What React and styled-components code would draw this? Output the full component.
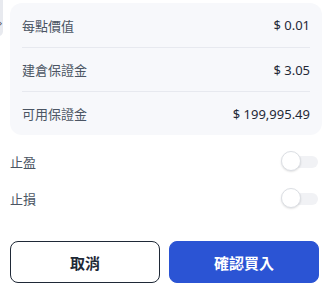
import React, { useState } from 'react'
import styled, { createGlobalStyle } from 'styled-components'

const GlobalStyle = createGlobalStyle`
  html, body { margin: 0; padding: 0; background: #ffffff; overflow: hidden; }
  body { font-family: "Noto Sans", "Noto Sans CJK TC", sans-serif; }
`

const Page = styled.div`
  position: relative;
  width: 327px;
  height: 283px;
  padding: 3px 5px 0 10px;
  box-sizing: border-box;
`

const EdgeTab = styled.div`
  position: absolute;
  left: -6px;
  top: -6px;
  width: 9px;
  height: 42px;
  border-radius: 5px;
  background: #e8eaef;
  display: flex;
  align-items: center;
  justify-content: flex-end;
  padding: 14px 1px 0 0;
  box-sizing: border-box;
  font-size: 9px;
  color: #374151;
`

const InfoCard = styled.div`
  background: #f7f8fb;
  border-radius: 12px;
  padding: 0 12px;
`

const InfoRow = styled.div`
  height: 44px;
  display: flex;
  align-items: center;
  justify-content: space-between;
  border-top: ${p => (p.first ? 'none' : '1px solid #e7e9ef')};
  box-sizing: border-box;
`

const Label = styled.span`
  font-family: "Noto Sans CJK TC", sans-serif;
  font-size: 13px;
  color: #4b5563;
`

const Value = styled.span`
  font-family: "Noto Sans", "Noto Sans CJK TC", sans-serif;
  font-size: 13px;
  color: #1f2937;
`

const ToggleList = styled.div`
  margin-top: 8px;
  padding-right: 4px;
`

const ToggleRow = styled.div`
  height: 37px;
  display: flex;
  align-items: center;
  justify-content: space-between;
`

const Track = styled.button`
  position: relative;
  width: 36px;
  height: 12px;
  border: none;
  padding: 0;
  border-radius: 6px;
  background: ${p => (p.on ? '#2b54d4' : '#f1f2f5')};
  cursor: pointer;
`

const Thumb = styled.span`
  position: absolute;
  top: -5px;
  left: ${p => (p.on ? '15px' : '-1px')};
  width: 20px;
  height: 20px;
  border-radius: 50%;
  background: #ffffff;
  border: 1px solid #dcdfe4;
  box-shadow: 0 1px 2px rgba(0, 0, 0, 0.12);
  box-sizing: border-box;
`

const Actions = styled.div`
  margin-top: 24px;
  width: 309px;
  display: grid;
  grid-template-columns: 1fr 1fr;
  gap: 9px;
`

const ActionButton = styled.button`
  height: 42px;
  border-radius: 8px;
  font-family: "Noto Sans CJK TC", sans-serif;
  font-size: 15px;
  font-weight: 700;
  cursor: pointer;
  border: 1px solid ${p => (p.primary ? '#2b54d4' : '#1f2937')};
  background: ${p => (p.primary ? '#2b54d4' : '#ffffff')};
  color: ${p => (p.primary ? '#ffffff' : '#1f2937')};
`

const Switch = ({ on, onToggle }) => (
  <Track on={on ? 1 : 0} onClick={onToggle}>
    <Thumb on={on ? 1 : 0} />
  </Track>
)

const rows = [
  { label: '每點價值', value: '$ 0.01' },
  { label: '建倉保證金', value: '$ 3.05' },
  { label: '可用保證金', value: '$ 199,995.49' },
]

export default function App() {
  const [takeProfit, setTakeProfit] = useState(false)
  const [stopLoss, setStopLoss] = useState(false)

  return (
    <Page>
      <GlobalStyle />
      <EdgeTab>›</EdgeTab>
      <InfoCard>
        {rows.map((r, i) => (
          <InfoRow key={r.label} first={i === 0}>
            <Label>{r.label}</Label>
            <Value>{r.value}</Value>
          </InfoRow>
        ))}
      </InfoCard>
      <ToggleList>
        <ToggleRow>
          <Label>止盈</Label>
          <Switch on={takeProfit} onToggle={() => setTakeProfit(!takeProfit)} />
        </ToggleRow>
        <ToggleRow>
          <Label>止損</Label>
          <Switch on={stopLoss} onToggle={() => setStopLoss(!stopLoss)} />
        </ToggleRow>
      </ToggleList>
      <Actions>
        <ActionButton>取消</ActionButton>
        <ActionButton primary>確認買入</ActionButton>
      </Actions>
    </Page>
  )
}
